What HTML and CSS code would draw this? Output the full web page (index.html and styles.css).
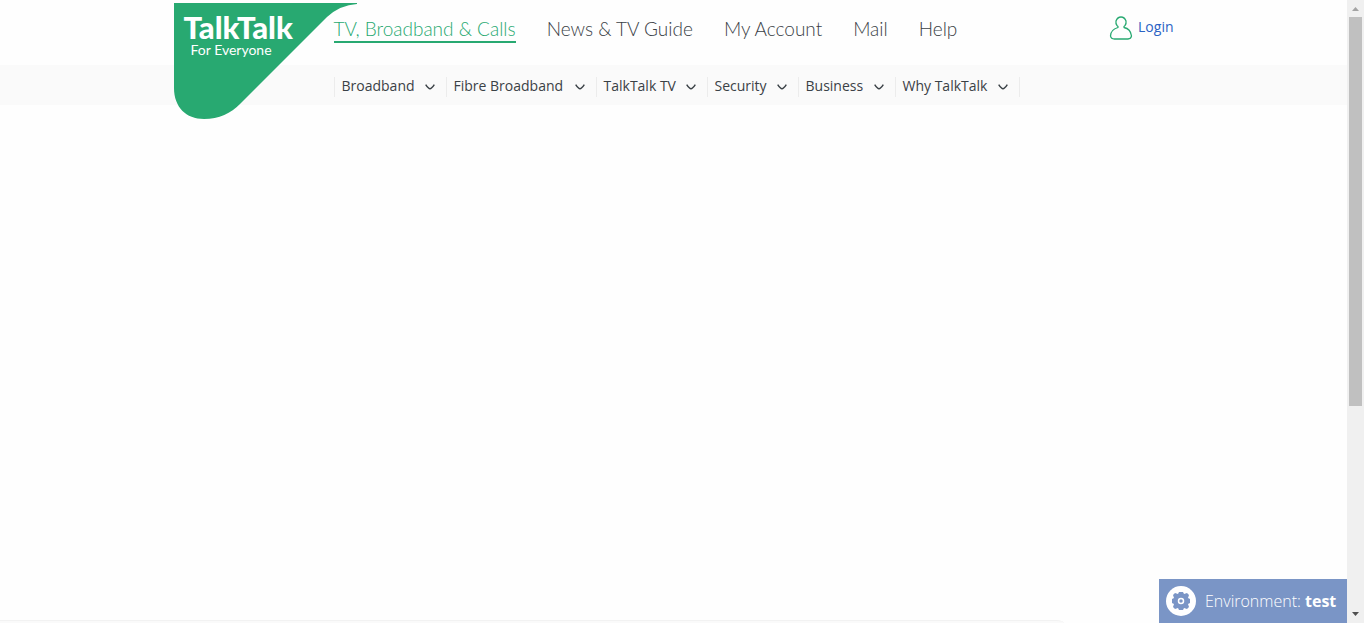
FILE: index.html
```
<!DOCTYPE html>
<html lang="en">
<head>
<meta charset="utf-8">
<title>TalkTalk - For Everyone</title>
<link rel="stylesheet" href="styles.css">
</head>
<body>
<svg class="defs" aria-hidden="true"><symbol id="chevron" viewBox="0 0 10 6"><path d="M.7.7Q3.500 4.800 5 4.800T9.300.7" fill="none" stroke="currentColor" stroke-width="1.500"/></symbol></svg>
<div class="page">
  <header class="header">
    <div class="top">
      <div class="container top-inner">
        <a class="logo" href="#">
          <svg class="logo-shape" viewBox="0 0 183 116" aria-hidden="true"><path d="M0 0H183V1Q166 2 153 14L66 101C57 110 45 116 30 116C12 116 0 104 0 85Z" fill="#28a971"/></svg>
          <span class="logo-name">TalkTalk</span>
          <span class="logo-tag">For Everyone</span>
        </a>
        <nav class="main-nav">
          <a class="active" href="#">TV, Broadband &amp; Calls</a>
          <a href="#">News &amp; TV Guide</a>
          <a href="#">My Account</a>
          <a href="#">Mail</a>
          <a href="#">Help</a>
        </nav>
        <a class="login" href="#">
          <svg width="24" height="24" viewBox="0 0 24 24" aria-hidden="true"><path d="M9 11.500C4 13 1.500 16.500 1.500 20Q2 23 5.500 23H19Q22 23 22.500 20C22 16 20 12.500 15 11.500Q14.500 10.500 16 9.500Q17.500 8 17 5Q15.500 1 12 1T7 5Q6.500 8 8 9.500Q9.500 10.500 9 11.500Z" fill="none" stroke="#28a971" stroke-width="1.300"/></svg>
          <span>Login</span>
        </a>
      </div>
    </div>
    <div class="sub">
      <nav class="container sub-nav">
        <button type="button">Broadband<svg class="chev"><use href="#chevron"/></svg></button>
        <button type="button">Fibre Broadband<svg class="chev"><use href="#chevron"/></svg></button>
        <button type="button">TalkTalk TV<svg class="chev"><use href="#chevron"/></svg></button>
        <button type="button">Security<svg class="chev"><use href="#chevron"/></svg></button>
        <button type="button">Business<svg class="chev"><use href="#chevron"/></svg></button>
        <button type="button">Why TalkTalk<svg class="chev"><use href="#chevron"/></svg></button>
      </nav>
    </div>
  </header>
  <main class="content"></main>
  <div class="panel-edge"></div>
  <aside class="environment">
    <svg width="30" height="30" viewBox="0 0 30 30" aria-hidden="true"><circle cx="15" cy="15" r="15" fill="#fff"/><path d="M13 6h4l1 2 3-1 2 2-1 3 2 1v4l-2 1 1 3-2 2-3-1-1 2h-4l-1-2-3 1-2-2 1-3-2-1v-4l2-1-1-3 2-2 3 1z" fill="#7a95c6"/><circle cx="15" cy="15" r="2.500" fill="none" stroke="#fff" stroke-width="1.500"/></svg>
    <span>Environment: <strong>test</strong></span>
  </aside>
</div>
<div class="scrollbar" aria-hidden="true">
  <svg class="arrow" viewBox="0 0 7 4"><path d="M0 4L3.500 0L7 4Z" fill="#a3a3a3"/></svg>
  <div class="track"><div class="thumb"></div></div>
  <svg class="arrow" viewBox="0 0 7 4"><path d="M0 0H7L3.500 4Z" fill="#505050"/></svg>
</div>
</body>
</html>
```
FILE: styles.css
```
* { box-sizing: border-box; }
body {
  margin: 0;
  height: 100vh;
  display: grid;
  grid-template-columns: 1fr 17px;
  background: #fefefe;
  color: #3a4146;
  font-family: "Open Sans", sans-serif;
  overflow: hidden;
}
a { color: inherit; text-decoration: none; }
.defs { position: absolute; width: 0; height: 0; }
.page { display: flex; flex-direction: column; min-width: 0; height: 100vh; }
.container { width: 100%; max-width: 1000px; margin: 0 auto; }
.top-inner { display: flex; position: relative; padding-left: 160px; height: 65px; }
.logo {
  position: absolute;
  top: 3px;
  left: 0;
  display: flex;
  flex-direction: column;
  width: 183px;
  height: 116px;
  padding: 10px;
  color: #fff;
  font-family: Lato, sans-serif;
  white-space: nowrap;
}
.logo-shape { position: absolute; inset: 0; width: 100%; height: 100%; z-index: -1; }
.logo { z-index: 1; }
.logo-name { font-size: 31px; line-height: 28px; font-weight: 900; }
.logo-tag { padding-left: 7px; font-size: 14px; line-height: 18px; }
.main-nav {
  position: relative;
  z-index: 2;
  display: flex;
  align-items: flex-start;
  gap: 31px;
  padding-top: 16px;
  font-family: Lato, sans-serif;
  font-size: 19px;
  font-weight: 300;
  line-height: 25px;
  white-space: nowrap;
}
.main-nav .active { color: #28a971; border-bottom: 2px solid #28a971; }
.login {
  display: flex;
  align-items: center;
  align-self: flex-start;
  gap: 5px;
  margin-left: auto;
  padding-top: 16px;
  color: #2a62c4;
  font-size: 14px;
  line-height: 22px;
}
.login span { padding-bottom: 2px; }
.sub { background: #fafafa; height: 40px; }
.sub-nav {
  display: grid;
  grid-template-columns: 112px 150px 111px 91px 97px 125px;
  padding: 12px 0 0 160px;
}
.sub-nav button {
  display: flex;
  align-items: center;
  justify-content: space-between;
  height: 20px;
  padding: 0 11px 3px 7px;
  border: 0;
  border-left: 1px solid #ececec;
  background: none;
  color: inherit;
  font: 14px/16px "Open Sans", sans-serif;
  white-space: nowrap;
}
.sub-nav button:last-child { border-right: 1px solid #ececec; }
.chev { width: 10px; height: 6px; margin-top: 3px; }
.content { flex: 1; }
.panel-edge {
  width: 79%;
  height: 3px;
  background: #fafafa;
  border-top: 1px solid #f2f2f2;
  border-top-right-radius: 8px 3px;
}
.environment {
  position: fixed;
  right: 17px;
  bottom: 0;
  display: flex;
  align-items: center;
  gap: 9px;
  min-width: 188px;
  height: 44px;
  padding: 0 7px;
  background: #7a95c6;
  color: #fff;
  font-size: 16px;
  font-weight: 300;
  white-space: nowrap;
}
.environment strong { font-weight: 700; }
.scrollbar {
  display: flex;
  flex-direction: column;
  align-items: center;
  padding: 7px 2px;
  background: #f0f0f0;
}
.arrow { width: 7px; height: 4px; flex: none; }
.track { flex: 1; width: 13px; padding: 6px 0; }
.thumb { height: 66%; background: #c0c0c0; }
```
